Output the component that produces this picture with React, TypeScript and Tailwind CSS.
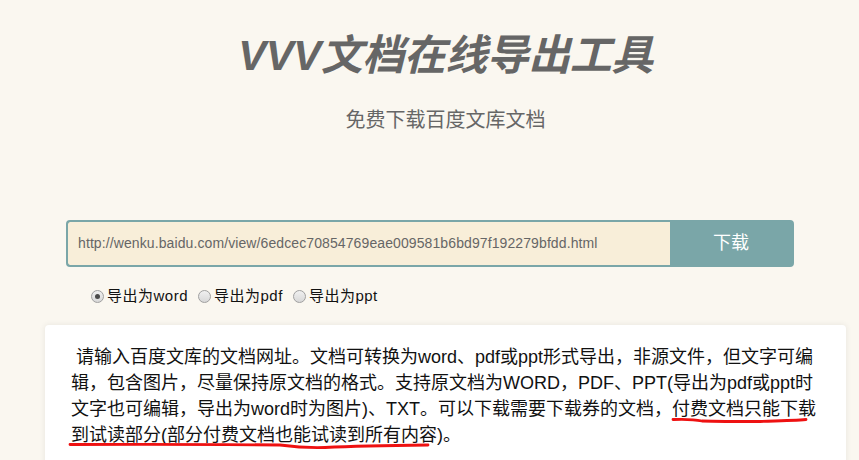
import React from "react";

const font = { fontFamily: '"Liberation Sans", "Noto Sans CJK SC", sans-serif' };

function Radio({ checked, label }: { checked?: boolean; label: string }) {
  return (
    <div className="flex items-center">
      <span className="w-[13px] h-[13px] rounded-full border border-[#a0a0a0] bg-gradient-to-b from-[#f0f0f0] to-[#d8d8d8] flex items-center justify-center">
        {checked && <span className="w-[5px] h-[5px] rounded-full bg-[#4a4a4a]" />}
      </span>
      <span className="ml-[3px] text-[15px] leading-[24px] tracking-[0.5px] text-[#111]">{label}</span>
    </div>
  );
}

export default function App() {
  return (
    <div className="relative w-[859px] h-[460px] overflow-hidden bg-[#faf7f0]" style={font}>
      <div className="ml-[45px] w-[801px] pt-[30px] h-[81px] text-center text-[42px] leading-[52px] font-bold italic text-[#666666] tracking-[-0.5px]">
        VVV文档在线导出工具
      </div>
      <div className="ml-[45px] w-[801px] mt-[24px] h-[30px] text-center text-[20px] leading-[30px] text-[#666666]">
        免费下载百度文库文档
      </div>
      <div className="ml-[66px] w-[728px] mt-[85px] h-[47px] flex rounded-[4px] border-2 border-[#7aa6a8] bg-[#7aa6a8] overflow-hidden">
        <div className="w-[602px] h-full bg-[#f8eed9] rounded-l-[2px] flex items-center pl-[10px] text-[14px] tracking-[0.1px] text-[#666666]">
          http://wenku.baidu.com/view/6edcec70854769eae009581b6bd97f192279bfdd.html
        </div>
        <div className="flex-1 flex items-center justify-center text-white text-[18px]">下载</div>
      </div>
      <div className="ml-[91px] mt-[17px] h-[24px] flex items-center gap-[10px]">
        <Radio checked label="导出为word" />
        <Radio label="导出为pdf" />
        <Radio label="导出为ppt" />
      </div>
      <div className="ml-[45px] w-[801px] mt-[17px] h-[200px] bg-white rounded-t-[4px] shadow-[0_0_6px_rgba(0,0,0,0.08)] pt-[19px] pl-[26px] text-[18px] leading-[26px] text-[#111] whitespace-nowrap">
        &nbsp;请输入百度文库的文档网址。文档可转换为word、pdf或ppt形式导出，非源文件，但文字可编
        <br />
        辑，包含图片，尽量保持原文档的格式。支持原文档为WORD，PDF、PPT(导出为pdf或ppt时
        <br />
        文字也可编辑，导出为word时为图片)、TXT。可以下载需要下载券的文档，付费文档只能下载
        <br />
        到试读部分(部分付费文档也能试读到所有内容)。
      </div>
      <svg className="absolute left-0 top-0 pointer-events-none" width="859" height="460" viewBox="0 0 859 460">
        <path
          d="M673 419.5 C685 419 695 419.5 702 421 C720 421.5 745 421.5 760 421.5 C775 421 795 420.5 806 419.5"
          fill="none"
          stroke="#ee1111"
          strokeWidth="2.8"
          strokeLinecap="round"
        />
        <path
          d="M70 444.5 C150 444 230 444.5 280 445 C295 447 310 448 325 447.5 C345 446.5 380 445.5 428 445"
          fill="none"
          stroke="#ee1111"
          strokeWidth="2.8"
          strokeLinecap="round"
        />
      </svg>
    </div>
  );
}
